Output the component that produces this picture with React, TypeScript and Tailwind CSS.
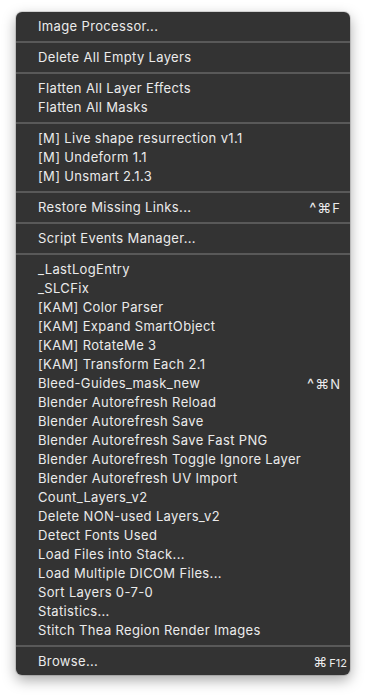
type Item = { label: string; shortcut?: "ctrlcmdF" | "ctrlcmdN" | "cmdF12" };

const groups: Item[][] = [
  [{ label: "Image Processor..." }],
  [{ label: "Delete All Empty Layers" }],
  [{ label: "Flatten All Layer Effects" }, { label: "Flatten All Masks" }],
  [
    { label: "[M] Live shape resurrection v1.1" },
    { label: "[M] Undeform 1.1" },
    { label: "[M] Unsmart 2.1.3" },
  ],
  [{ label: "Restore Missing Links...", shortcut: "ctrlcmdF" }],
  [{ label: "Script Events Manager..." }],
  [
    { label: "_LastLogEntry" },
    { label: "_SLCFix" },
    { label: "[KAM] Color Parser" },
    { label: "[KAM] Expand SmartObject" },
    { label: "[KAM] RotateMe 3" },
    { label: "[KAM] Transform Each 2.1" },
    { label: "Bleed-Guides_mask_new", shortcut: "ctrlcmdN" },
    { label: "Blender Autorefresh Reload" },
    { label: "Blender Autorefresh Save" },
    { label: "Blender Autorefresh Save Fast PNG" },
    { label: "Blender Autorefresh Toggle Ignore Layer" },
    { label: "Blender Autorefresh UV Import" },
    { label: "Count_Layers_v2" },
    { label: "Delete NON-used Layers_v2" },
    { label: "Detect Fonts Used" },
    { label: "Load Files into Stack..." },
    { label: "Load Multiple DICOM Files..." },
    { label: "Sort Layers 0-7-0" },
    { label: "Statistics..." },
    { label: "Stitch Thea Region Render Images" },
  ],
  [{ label: "Browse...", shortcut: "cmdF12" }],
];

function Shortcut({ kind }: { kind: NonNullable<Item["shortcut"]> }) {
  if (kind === "cmdF12") {
    return (
      <span className="ml-auto -mr-[8px] flex items-baseline gap-[2px] tracking-normal">
        <span className="text-[14px]">⌘</span>
        <span className="text-[11px]">F12</span>
      </span>
    );
  }
  return (
    <span className="ml-auto -mr-[1px] flex items-baseline gap-[1px] text-[14px] tracking-normal">
      <span className="text-[15px]">^</span>
      <span>⌘</span>
      <span className="text-[13px]">{kind === "ctrlcmdF" ? "F" : "N"}</span>
    </span>
  );
}

export default function App() {
  return (
    <div className="h-[696px] w-[367px] overflow-hidden bg-white pt-3 pl-4">
      <div
        className="w-[334px] rounded-[6px] bg-[#333333] pt-[5px] pb-[4px] text-[#ebebeb] shadow-[0_5px_14px_rgba(0,0,0,0.35),0_0_0_1px_rgba(0,0,0,0.12)]"
        style={{ fontFamily: "Inter, 'Liberation Sans', sans-serif" }}
      >
        {groups.map((group, gi) => (
          <div key={gi}>
            {gi > 0 ? (
              <div className="flex h-[12px] items-center">
                <div className="h-[2px] w-full bg-[#595959]" />
              </div>
            ) : null}
            {group.map((item) => (
              <div
                key={item.label}
                className="flex h-[19px] items-center pl-[22px] pr-[11px] text-[13px] leading-none tracking-[0.35px]"
              >
                <span>{item.label}</span>
                {item.shortcut ? <Shortcut kind={item.shortcut} /> : null}
              </div>
            ))}
          </div>
        ))}
      </div>
    </div>
  );
}
